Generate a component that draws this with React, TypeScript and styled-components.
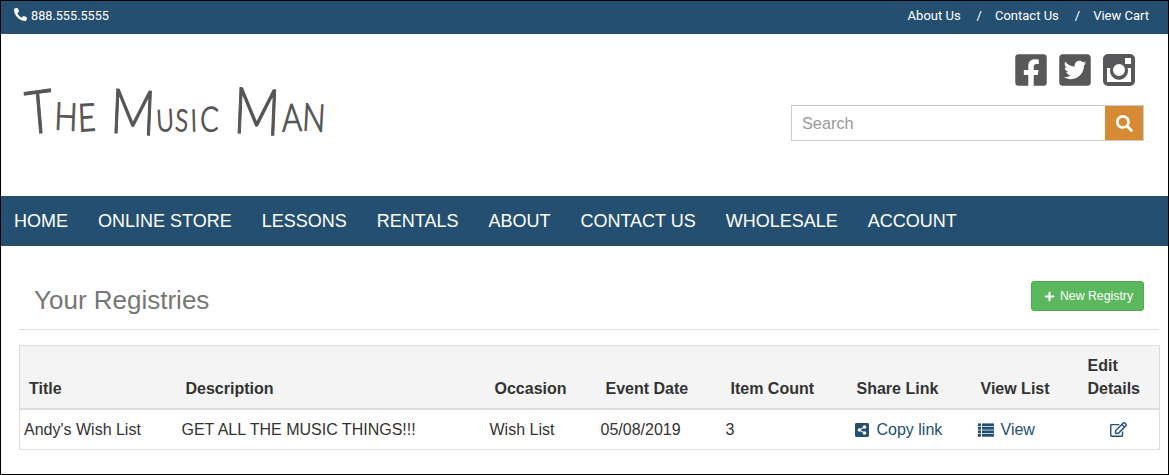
import React from "react";
import styled, { createGlobalStyle } from "styled-components";
import { FaFacebookSquare, FaTwitterSquare, FaSearch, FaPlus, FaShareAltSquare, FaRegEdit, FaPhoneAlt } from "react-icons/fa";

const Global = createGlobalStyle`
  html, body { margin: 0; padding: 0; background: #fff; }
  * { box-sizing: border-box; }
  body { font-family: "Liberation Sans", Arial, sans-serif; color: #333; }
`;

const Frame = styled.div`
  width: 1169px;
  height: 475px;
  border: 1px solid #000;
  overflow: hidden;
  background: #fff;
`;
const TopBar = styled.div`
  height: 33px;
  background: #254f71;
  color: #fff;
  display: flex;
  justify-content: space-between;
  align-items: center;
  padding: 0 19px 4px 13px;
  font: 12.7px Roboto, "Liberation Sans", sans-serif;
`;
const Phone = styled.div`
  display: flex;
  align-items: center;
  gap: 4px;
  svg { width: 13px; height: 13px; margin-bottom: 3px; }
`;
const TopLinks = styled.div`
  display: flex;
  gap: 13px;
  font-size: 13px;
`;
const Sep = styled.span`
  margin-left: 3px;
`;
const Header = styled.div`
  height: 162px;
  display: flex;
  justify-content: space-between;
  padding: 18px 24px 0 24px;
`;
const Logo = styled.div`
  margin-top: 25px;
  height: 60px;
  display: flex;
  align-items: baseline;
  font: 300 40px/60px Lato, "Liberation Sans", sans-serif;
  color: #555;
  white-space: nowrap;
  -webkit-text-stroke: 1.2px #555;
  transform: scaleX(0.8);
  transform-origin: left center;
`;
const Letter = styled.span<{ $size: number; $rot: number; $gap?: number; $drop?: number }>`
  display: inline-block;
  font-size: ${(p) => p.$size}px;
  transform: translateY(${(p) => p.$drop ?? 0}px) rotate(${(p) => p.$rot}deg);
  margin-right: ${(p) => p.$gap ?? 0}px;
`;
const HeaderRight = styled.div`
  display: flex;
  flex-direction: column;
  align-items: flex-end;
  gap: 19px;
`;
const Socials = styled.div`
  display: flex;
  gap: 12px;
  padding-right: 9px;
  color: #58585a;
  height: 34px;
  svg { width: 32px; height: 36px; display: block; }
`;
const Insta = styled.svg`
  width: 32px;
  height: 36px;
`;
const Search = styled.div`
  width: 353px;
  height: 36px;
  display: flex;
  border: 1px solid #ccc;
`;
const SearchInput = styled.div`
  flex: 1;
  padding-left: 10px;
  font-size: 16.3px;
  line-height: 35px;
  color: #999;
`;
const SearchBtn = styled.div`
  width: 38px;
  background: #d68a33;
  color: #fff;
  display: flex;
  align-items: center;
  justify-content: center;
  svg { width: 17px; height: 17px; }
`;
const Nav = styled.nav`
  height: 50px;
  background: #254f71;
  display: flex;
  align-items: center;
  gap: 30px;
  padding: 0 13px;
  color: #fff;
  font-size: 18px;
`;
const Main = styled.div`
  padding: 0 9px 0 18px;
`;
const TitleRow = styled.div`
  height: 84px;
  border-bottom: 1px solid #ddd;
  display: flex;
  justify-content: space-between;
  padding: 35px 15px 0 15px;
`;
const Title = styled.h1`
  margin: 0;
  font-weight: 400;
  font-size: 26px;
  line-height: 38px;
  color: #777;
`;
const NewBtn = styled.div`
  width: 113px;
  height: 30px;
  background: #5cb85c;
  border: 1px solid #4cae4c;
  border-radius: 3px;
  color: #fff;
  font-size: 12.3px;
  display: flex;
  align-items: center;
  justify-content: center;
  gap: 5px;
  padding-left: 2px;
  svg { width: 11px; height: 11px; }
`;
const Table = styled.table`
  width: 1140px;
  margin-top: 15px;
  border-collapse: collapse;
  border: 1px solid #ddd;
  table-layout: fixed;
  font-size: 16px;
`;
const Th = styled.th<{ $w: number; $pad?: number }>`
  width: ${(p) => p.$w}px;
  background: #f4f4f4;
  border-bottom: 2px solid #ddd;
  text-align: left;
  vertical-align: bottom;
  font-weight: 700;
  padding: 8px 4px 8px ${(p) => p.$pad ?? 10}px;
  line-height: 23px;
`;
const Td = styled.td<{ $center?: boolean; $tight?: boolean }>`
  padding: 8px 4px 8px ${(p) => (p.$tight ? 4 : 5)}px;
  line-height: 23px;
  height: 39px;
  text-align: ${(p) => (p.$center ? "center" : "left")};
`;
const LinkCell = styled.span<{ $gap?: number; $shift?: number }>`
  color: #254f71;
  display: inline-flex;
  align-items: center;
  vertical-align: top;
  height: 23px;
  gap: ${(p) => p.$gap ?? 8}px;
  margin-left: ${(p) => p.$shift ?? 3}px;
  svg { width: 14px; height: 16px; }
`;
const EditLink = styled(LinkCell)`
  margin-left: 0;
  svg { width: 17px; height: 15px; }
`;

const ListIcon = () => (
  <svg viewBox="0 0 16 14" fill="currentColor" style={{ width: 16, height: 14 }}>
    <rect x="0" y="0.4" width="3" height="2.8" />
    <rect x="4" y="0.4" width="12" height="2.8" />
    <rect x="0" y="3.9" width="3" height="2.8" />
    <rect x="4" y="3.9" width="12" height="2.8" />
    <rect x="0" y="7.4" width="3" height="2.8" />
    <rect x="4" y="7.4" width="12" height="2.8" />
    <rect x="0" y="10.9" width="3" height="2.8" />
    <rect x="4" y="10.9" width="12" height="2.8" />
  </svg>
);

const logo: [string, number, number, number, number][] = [
  ["T", 60, -6, 2, 2],
  ["H", 38, 3, 1, -1],
  ["E", 38, -3, 18, 0],
  ["M", 62, 3, 1, 3],
  ["U", 30, -4, 2, 0],
  ["S", 30, 4, 3, 0],
  ["I", 30, -2, 4, 0],
  ["C", 34, 3, 20, 0],
  ["M", 64, 3, 1, 3],
  ["A", 38, -2, 1, 0],
  ["N", 38, 4, 0, 0],
];

export default function App() {
  return (
    <Frame>
      <Global />
      <TopBar>
        <Phone><FaPhoneAlt />888.555.5555</Phone>
        <TopLinks>
          <span>About Us</span><Sep>/</Sep><span>Contact Us</span><Sep>/</Sep><span>View Cart</span>
        </TopLinks>
      </TopBar>
      <Header>
        <Logo aria-label="The Music Man">
          {logo.map(([c, s, r, g, d], i) => (
            <Letter key={i} $size={s} $rot={r} $gap={g} $drop={d}>{c}</Letter>
          ))}
        </Logo>
        <HeaderRight>
          <Socials>
            <FaFacebookSquare />
            <FaTwitterSquare />
            <Insta viewBox="0 0 32 32" fill="currentColor">
              <path fillRule="evenodd" d="M5 0h22a5 5 0 0 1 5 5v22a5 5 0 0 1-5 5H5a5 5 0 0 1-5-5V5a5 5 0 0 1 5-5zM22 4v6h6V4zM4 14v14h24V14h-3.4a9 9 0 1 1-17.2 0zM16 10a6 6 0 1 0 0 12 6 6 0 0 0 0-12z" />
            </Insta>
          </Socials>
          <Search>
            <SearchInput>Search</SearchInput>
            <SearchBtn><FaSearch /></SearchBtn>
          </Search>
        </HeaderRight>
      </Header>
      <Nav>
        <span>HOME</span><span>ONLINE STORE</span><span>LESSONS</span><span>RENTALS</span><span>ABOUT</span><span>CONTACT US</span><span>WHOLESALE</span><span>ACCOUNT</span>
      </Nav>
      <Main>
        <TitleRow>
          <Title>Your Registries</Title>
          <NewBtn><FaPlus />New Registry</NewBtn>
        </TitleRow>
        <Table>
          <thead>
            <tr>
              <Th $w={157} $pad={9}>Title</Th>
              <Th $w={308} $pad={9}>Description</Th>
              <Th $w={111}>Occasion</Th>
              <Th $w={125}>Event Date</Th>
              <Th $w={126}>Item Count</Th>
              <Th $w={124}>Share Link</Th>
              <Th $w={107}>View List</Th>
              <Th $w={82}>Edit Details</Th>
            </tr>
          </thead>
          <tbody>
            <tr>
              <Td $tight>Andy's Wish List</Td>
              <Td>GET ALL THE MUSIC THINGS!!!</Td>
              <Td>Wish List</Td>
              <Td>05/08/2019</Td>
              <Td>3</Td>
              <Td><LinkCell><FaShareAltSquare />Copy link</LinkCell></Td>
              <Td><LinkCell $gap={7} $shift={2}><ListIcon />View</LinkCell></Td>
              <Td $center><EditLink><FaRegEdit /></EditLink></Td>
            </tr>
          </tbody>
        </Table>
      </Main>
    </Frame>
  );
}
